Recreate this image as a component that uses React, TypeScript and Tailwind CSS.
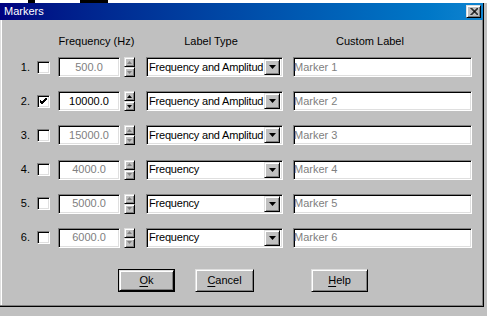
import React from 'react';

interface MarkerRow {
  id: number;
  enabled: boolean;
  frequency: string;
  labelType: string;
  customLabel: string;
}

const rows: MarkerRow[] = [
  { id: 1, enabled: false, frequency: '500.0', labelType: 'Frequency and Amplitud', customLabel: 'Marker 1' },
  { id: 2, enabled: true, frequency: '10000.0', labelType: 'Frequency and Amplitud', customLabel: 'Marker 2' },
  { id: 3, enabled: false, frequency: '15000.0', labelType: 'Frequency and Amplitud', customLabel: 'Marker 3' },
  { id: 4, enabled: false, frequency: '4000.0', labelType: 'Frequency', customLabel: 'Marker 4' },
  { id: 5, enabled: false, frequency: '5000.0', labelType: 'Frequency', customLabel: 'Marker 5' },
  { id: 6, enabled: false, frequency: '6000.0', labelType: 'Frequency', customLabel: 'Marker 6' },
];

// classic 3D borders
const sunken =
  'border border-t-[#808080] border-l-[#808080] border-b-white border-r-white shadow-[inset_1px_1px_0_#000,inset_-1px_-1px_0_#dfdfdf]';
const raised =
  'border border-t-[#dfdfdf] border-l-[#dfdfdf] border-b-black border-r-black shadow-[inset_1px_1px_0_#fff,inset_-1px_-1px_0_#808080]';

const Arrow: React.FC<{ up?: boolean; disabled?: boolean }> = ({ up, disabled }) => (
  <svg width="5" height="3" viewBox="0 0 5 3" className="block">
    <polygon
      points={up ? '2.5,0 5,3 0,3' : '0,0 5,0 2.5,3'}
      fill={disabled ? '#808080' : '#000'}
    />
  </svg>
);

const Spinner: React.FC<{ disabled: boolean }> = ({ disabled }) => (
  <div className="ml-[4px] flex h-[20px] w-[11px] flex-col">
    <div className={`${raised} flex h-[10px] items-center justify-center bg-[#c0c0c0]`}>
      <Arrow up disabled={disabled} />
    </div>
    <div className={`${raised} flex h-[10px] items-center justify-center bg-[#c0c0c0]`}>
      <Arrow disabled={disabled} />
    </div>
  </div>
);

const Checkbox: React.FC<{ checked: boolean }> = ({ checked }) => (
  <div className={`${sunken} ml-[7px] flex h-[13px] w-[13px] items-center justify-center bg-white`}>
    {checked && (
      <svg width="7" height="7" viewBox="0 0 7 7" className="block">
        <path d="M0 3 L2 5 L7 0 M0 4 L2 6 L7 1 M0 2 L2 4 L7 -1" stroke="#000" strokeWidth="1" fill="none" />
      </svg>
    )}
  </div>
);

const Button: React.FC<{ label: string; hotkey: number; isDefault?: boolean; className?: string }> = ({
  label,
  hotkey,
  isDefault,
  className,
}) => {
  const text = (
    <span>
      {label.slice(0, hotkey)}
      <span className="underline underline-offset-2">{label[hotkey]}</span>
      {label.slice(hotkey + 1)}
    </span>
  );
  if (isDefault) {
    return (
      <div className={`h-[23px] border border-black ${className ?? ''}`}>
        <div className={`${raised} flex h-full w-full items-center justify-center bg-[#c0c0c0]`}>{text}</div>
      </div>
    );
  }
  return (
    <div className={`${raised} flex h-[23px] items-center justify-center bg-[#c0c0c0] ${className ?? ''}`}>
      {text}
    </div>
  );
};

const App: React.FC = () => {
  return (
    <div
      className="relative h-[316px] w-[487px] overflow-hidden bg-[#c0c0c0] text-[11px] leading-[13px] text-black"
      style={{ fontFamily: '"Liberation Sans", Arial, sans-serif' }}
    >
      {/* strip of the screen above the dialog */}
      <div className="flex h-[3px] bg-white">
        <div className="ml-[28px] h-[3px] w-[7px] bg-black" />
        <div className="ml-[45px] h-[3px] w-[28px] bg-black" />
      </div>

      {/* dialog window */}
      <div className="flex h-[304px] w-[484px] flex-col shadow-[inset_-1px_-1px_0_#000,inset_-2px_-2px_0_#808080,inset_1px_0_0_#dfdfdf,inset_2px_0_0_#fff]">
        {/* title bar */}
        <div className="mr-[1px] flex h-[17px] items-center bg-linear-to-r from-[#000080] to-[#1084d0] pl-[4px] pr-[2px]">
          <span className="flex-1 text-white">Markers</span>
          <div className={`${raised} flex h-[13px] w-[15px] items-center justify-center bg-[#c0c0c0]`}>
            <svg width="8" height="7" viewBox="0 0 8 7" className="block">
              <path d="M0.5 0 L7.5 7 M1.5 0 L8.5 7 M7.5 0 L0.5 7 M8.5 0 L1.5 7" stroke="#000" strokeWidth="1" />
            </svg>
          </div>
        </div>

        {/* body */}
        <div className="flex flex-col pt-[15px]">
          {/* headers */}
          <div className="flex h-[13px]">
            <div className="ml-[58px] w-[77px] text-center">Frequency (Hz)</div>
            <div className="ml-[11px] w-[130px] text-center">Label Type</div>
            <div className="ml-[11px] w-[166px] text-center">Custom Label</div>
          </div>

          <div className="mt-[9px] flex flex-col gap-[14.2px]">
            {rows.map((row) => (
              <div key={row.id} className="flex h-[20px] items-center">
                <div className="w-[30px] text-right">{row.id}.</div>
                <Checkbox checked={row.enabled} />
                <div
                  className={`${sunken} ml-[8px] flex h-[20px] w-[62px] items-center justify-center bg-white ${
                    row.enabled ? 'text-black' : 'text-[#808080]'
                  }`}
                >
                  {row.frequency}
                </div>
                <Spinner disabled={!row.enabled} />
                <div className={`${sunken} ml-[11px] flex h-[20px] w-[137px] items-center bg-white pr-[2px]`}>
                  <span className="flex-1 whitespace-nowrap pl-[2px] tracking-[-0.2px]">{row.labelType}</span>
                  <div className={`${raised} flex h-[16px] w-[16px] shrink-0 items-center justify-center bg-[#c0c0c0]`}>
                    <svg width="7" height="4" viewBox="0 0 7 4" className="block">
                      <polygon points="0,0 7,0 3.5,4" fill="#000" />
                    </svg>
                  </div>
                </div>
                <div className={`${sunken} ml-[10px] flex h-[20px] w-[179px] items-center bg-white text-[#808080]`}>
                  {row.customLabel}
                </div>
              </div>
            ))}
          </div>

          {/* buttons */}
          <div className="mt-[21px] flex">
            <Button label="Ok" hotkey={0} isDefault className="ml-[118px] w-[57px]" />
            <Button label="Cancel" hotkey={0} className="ml-[20px] w-[59px]" />
            <Button label="Help" hotkey={0} className="ml-[57px] w-[57px]" />
          </div>
        </div>
      </div>
    </div>
  );
};

export default App;
